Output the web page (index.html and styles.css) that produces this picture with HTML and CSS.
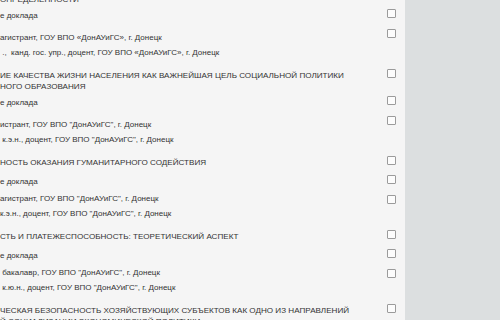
FILE: index.html
```html
<!DOCTYPE html>
<html lang="ru">
<head>
    <meta charset="UTF-8">
    <title>Доклады</title>
    <link rel="stylesheet" href="styles.css">
</head>
<body>

<div class="page">
    <div class="panel">
        <div class="list">
            <!-- 1 -->
            <div class="row title">
                <div class="txt">ИНСТИТУЦИОНАЛЬНОЙ СРЕДЫ В УСЛОВИЯХ<br>ОПРЕДЕЛЕННОСТИ</div>
                <span class="cb"></span>
            </div>
            <div class="row status">
                <div class="txt">е доклада</div>
                <span class="cb"></span>
            </div>
            <div class="row author low">
                <div class="txt">
                    <div>агистрант, ГОУ ВПО «ДонАУиГС», г. Донецк</div>
                    <div class="sup">&nbsp;.,&nbsp; канд. гос. упр., доцент, ГОУ ВПО «ДонАУиГС», г. Донецк</div>
                </div>
                <span class="cb"></span>
            </div>

            <!-- 2 -->
            <div class="row title">
                <div class="txt">ИЕ КАЧЕСТВА ЖИЗНИ НАСЕЛЕНИЯ КАК ВАЖНЕЙШАЯ ЦЕЛЬ СОЦИАЛЬНОЙ ПОЛИТИКИ<br>НОГО ОБРАЗОВАНИЯ</div>
                <span class="cb"></span>
            </div>
            <div class="row status">
                <div class="txt">е доклада</div>
                <span class="cb"></span>
            </div>
            <div class="row author low">
                <div class="txt">
                    <div>истрант, ГОУ ВПО "ДонАУиГС", г. Донецк</div>
                    <div class="sup">&nbsp;к.э.н., доцент, ГОУ ВПО "ДонАУиГС", г. Донецк</div>
                </div>
                <span class="cb"></span>
            </div>

            <!-- 3 -->
            <div class="row title">
                <div class="txt">НОСТЬ ОКАЗАНИЯ ГУМАНИТАРНОГО СОДЕЙСТВИЯ</div>
                <span class="cb"></span>
            </div>
            <div class="row status">
                <div class="txt">е доклада</div>
                <span class="cb"></span>
            </div>
            <div class="row author">
                <div class="txt">
                    <div>агистрант, ГОУ ВПО "ДонАУиГС", г. Донецк</div>
                    <div class="sup">к.э.н., доцент, ГОУ ВПО "ДонАУиГС", г. Донецк</div>
                </div>
                <span class="cb"></span>
            </div>

            <!-- 4 -->
            <div class="row title">
                <div class="txt">СТЬ И ПЛАТЕЖЕСПОСОБНОСТЬ: ТЕОРЕТИЧЕСКИЙ АСПЕКТ</div>
                <span class="cb"></span>
            </div>
            <div class="row status">
                <div class="txt">е доклада</div>
                <span class="cb"></span>
            </div>
            <div class="row author">
                <div class="txt">
                    <div>&nbsp;бакалавр, ГОУ ВПО "ДонАУиГС", г. Донецк</div>
                    <div class="sup">&nbsp;к.ю.н., доцент, ГОУ ВПО "ДонАУиГС", г. Донецк</div>
                </div>
                <span class="cb"></span>
            </div>

            <!-- 5 -->
            <div class="row title">
                <div class="txt">ЧЕСКАЯ БЕЗОПАСНОСТЬ ХОЗЯЙСТВУЮЩИХ СУБЪЕКТОВ КАК ОДНО ИЗ НАПРАВЛЕНИЙ<br>Й СОЦИАЛИЗАЦИИ ЭКОНОМИЧЕСКОЙ ПОЛИТИКИ</div>
                <span class="cb"></span>
            </div>
        </div>
    </div>
    <div class="side"></div>
</div>

</body>
</html>
```

FILE: styles.css
```css
html, body {
    margin: 0;
    height: 100%;
    overflow: hidden;
}
body {
    font-family: "Liberation Sans", Arial, sans-serif;
    font-size: 8px;
    color: #333;
}
.page {
    display: flex;
    height: 100%;
}
.panel {
    width: 405px;
    background-color: #f5f5f5;
    overflow: hidden;
}
.side {
    flex: 1;
    background-color: #dcdfe0;
}
.list {
    margin-top: -18px;
}
.row {
    display: flex;
    align-items: flex-start;
    box-sizing: border-box;
}
.txt {
    flex: 1;
    white-space: nowrap;
    overflow: hidden;
}
.cb {
    flex: none;
    width: 9px;
    height: 9px;
    box-sizing: border-box;
    margin: 0 9px 0 12px;
    border: 1px solid #9b9b9b;
    border-radius: 1px;
    background-color: #fcfcfc;
}
.title {
    min-height: 19px;
    padding-bottom: 4px;
}
.title .txt {
    font-size: 8.1px;
    line-height: 11px;
    padding-top: 1px;
}
.status {
    height: 20px;
}
.status .txt {
    line-height: 12px;
    padding-top: 1px;
}
.author {
    height: 35px;
}
.author .txt {
    line-height: 15px;
    margin-top: -4px;
}
.author.low {
    height: 40px;
}
.author.low .txt {
    margin-top: 1px;
}
```
